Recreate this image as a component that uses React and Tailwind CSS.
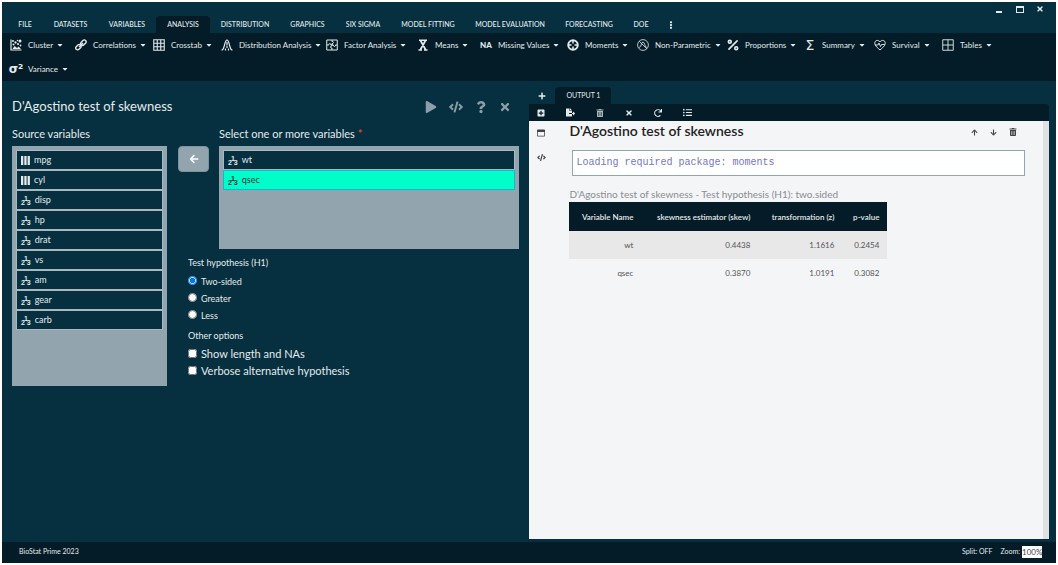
import React, { useState } from 'react';
import {
    FaArrowDown, FaArrowLeft, FaArrowUp, FaCaretDown, FaCode, FaEllipsisV, FaFileExport, FaListUl,
    FaPlay, FaPlus, FaPlusSquare, FaQuestion, FaRedo, FaRegWindowMaximize, FaTimes, FaTrashAlt,
} from 'react-icons/fa';
import { Percent } from 'lucide-react';

const menuTabs = [
    { name: 'FILE', width: 'w-[36px]' },
    { name: 'DATASETS', width: 'w-[55px]' },
    { name: 'VARIABLES', width: 'w-[58px]' },
    { name: 'ANALYSIS', width: 'w-[54px]' },
    { name: 'DISTRIBUTION', width: 'w-[70px]' },
    { name: 'GRAPHICS', width: 'w-[55px]' },
    { name: 'SIX SIGMA', width: 'w-[56px]' },
    { name: 'MODEL FITTING', width: 'w-[74px]' },
    { name: 'MODEL EVALUATION', width: 'w-[90px]' },
    { name: 'FORECASTING', width: 'w-[68px]' },
    { name: 'DOE', width: 'w-[36px]' },
];

const Svg = ({ children, sw = 2 }) => (
    <svg viewBox="0 0 24 24" className="h-3 w-3" fill="none" stroke="currentColor" strokeWidth={sw} aria-hidden="true">
        {children}
    </svg>
);

const ClusterIcon = () => (
    <Svg sw={2.4}>
        <path d="M2 1v21h21" />
        <path d="M5 20l4-6 5 4 3-3 5 5z" fill="currentColor" stroke="none" />
        <g fill="currentColor" stroke="none">
            <circle cx="6" cy="4" r="2" /><circle cx="11" cy="7" r="2.3" /><circle cx="7" cy="11" r="2" />
            <circle cx="16" cy="10" r="2.2" /><circle cx="20" cy="4" r="3" /><circle cx="15" cy="3" r="1.5" />
            <circle cx="21" cy="13" r="1.8" />
        </g>
    </Svg>
);

const LinkIcon = () => (
    <Svg sw={2.8}>
        <rect x="11" y="3.5" width="12" height="7.5" rx="3.7" transform="rotate(-45 17 7.5)" />
        <rect x="1" y="12.5" width="12" height="7.5" rx="3.7" transform="rotate(-45 7 16.5)" />
        <path d="M8 16l8-8" />
    </Svg>
);

const GridIcon = () => (
    <Svg sw={2.2}>
        <path d="M1.5 1.5h21v21h-21zM8.5 1.5v21M15.5 1.5v21M1.5 8.5h21M1.5 15.5h21" />
    </Svg>
);

const BellIcon = () => (
    <Svg sw={2.4}>
        <path d="M1 22c4 0 4-3 6-10 2-8 3-10 5-10s3 2 5 10c2 7 2 10 6 10" />
        <path d="M12 6v6M9 23v-4M12 13v5M15 23v-4" />
    </Svg>
);

const PuzzleIcon = () => (
    <Svg sw={2}>
        <path d="M1.5 2h21v20h-21z" />
        <path d="M12 2v3c4-1 4 5 0 4v5c-4-1-4 5 0 4v4" />
        <path d="M1.5 12h4c-1-4 5-4 4 0H12M12 12h3c-1 4 5 4 4 0h3.5" />
    </Svg>
);

const MeanIcon = () => (
    <Svg sw={3.4}>
        <path d="M4 2.500h16M3 22h7M14 22h7M7 3l10 18M17 3L7 21" />
    </Svg>
);

const MomentsIcon = () => (
    <Svg sw={4}>
        <circle cx="12" cy="12" r="9.5" />
        <path d="M12 3v6M12 15v6M3 12h6M15 12h6" strokeWidth="3" />
    </Svg>
);

const NonParametricIcon = () => (
    <Svg sw={1.6}>
        <circle cx="12" cy="12" r="10.8" />
        <path d="M4.5 4.5l15 15M4 17c5 0 4-11 8-11s3 11 8 11" />
    </Svg>
);

const HeartIcon = () => (
    <Svg sw={1.9}>
        <path d="M12 22C8 18 1.500 14 1.500 8.500 1.500 2 9 1 12 6c3-5 10.500-4 10.500 2.500C22.500 14 16 18 12 22z" />
        <path d="M2 12h6l2-4 3 7 2-4h6" />
    </Svg>
);

const TablesIcon = () => (
    <Svg sw={1.8}>
        <path d="M1.5 1.5h21v21h-21zM12 1.5v21M1.5 12h21" />
    </Svg>
);

const tools = [
    { name: 'Cluster', width: 'w-[65px]', icon: <ClusterIcon /> },
    { name: 'Correlations', width: 'w-[78px]', icon: <LinkIcon /> },
    { name: 'Crosstab', width: 'w-[68px]', icon: <GridIcon /> },
    { name: 'Distribution Analysis', width: 'w-[105px]', icon: <BellIcon /> },
    { name: 'Factor Analysis', width: 'w-[91px]', icon: <PuzzleIcon /> },
    { name: 'Means', width: 'w-[63px]', icon: <MeanIcon /> },
    { name: 'Missing Values', width: 'w-[87px]', icon: <span className="text-[8px] font-black">NA</span> },
    { name: 'Moments', width: 'w-[70px]', icon: <MomentsIcon /> },
    { name: 'Non-Parametric', width: 'w-[90px]', icon: <NonParametricIcon /> },
    { name: 'Proportions', width: 'w-[77px]', icon: <Percent className="h-3.5 w-3.5 shrink-0" strokeWidth={2.8} /> },
    { name: 'Summary', width: 'w-[70px]', icon: <span className="font-['DejaVu_Sans'] text-[14px]">Σ</span> },
    { name: 'Survival', width: 'w-[68px]', icon: <HeartIcon /> },
    { name: 'Tables', width: 'w-[69px]', icon: <TablesIcon /> },
    { name: 'Variance', width: 'w-[64px]', icon: <span className="font-['DejaVu_Sans'] text-[12px] font-bold">σ²</span> },
];

const sourceVariables = [
    { name: 'mpg', type: 'factor' },
    { name: 'cyl', type: 'factor' },
    { name: 'disp', type: 'scale' },
    { name: 'hp', type: 'scale' },
    { name: 'drat', type: 'scale' },
    { name: 'vs', type: 'scale' },
    { name: 'am', type: 'scale' },
    { name: 'gear', type: 'scale' },
    { name: 'carb', type: 'scale' },
];

const results = [
    { name: 'wt', skew: '0.4438', z: '1.1616', p: '0.2454' },
    { name: 'qsec', skew: '0.3870', z: '1.0191', p: '0.3082' },
];

const VariableItem = ({ name, type, selected, onClick }) => (
    <li>
        <button
            onClick={onClick}
            className={`flex h-5 w-full items-center gap-1 border px-1 text-left text-[9px] ${
                selected
                    ? 'border-[#14b8d4] bg-[#00ffc8] text-[#06303f]'
                    : 'border-[#a9b8bf] bg-[#06303f] text-[#e4eaec]'
            }`}
        >
            {type === 'factor' ? (
                <svg viewBox="0 0 9 9" className="h-[9px] w-[9px]" fill="currentColor" aria-hidden="true">
                    <path d="M0 0h2.300v9H0zM3.300 0h2.300v9H3.300zM6.600 0h2.300v9H6.600z" />
                </svg>
            ) : (
                <span className="flex items-end font-['Liberation_Sans',sans-serif] text-[7px] leading-[7px] font-bold">
                    <span>2</span>
                    <span className="-mx-px pb-1">1</span>
                    <span>3</span>
                </span>
            )}
            <span>{name}</span>
        </button>
    </li>
);

const App = () => {
    const [activeTab, setActiveTab] = useState('ANALYSIS');
    const [selected, setSelected] = useState('qsec');
    const [hypothesis, setHypothesis] = useState('Two-sided');

    return (
        <div className="min-h-screen bg-white p-0.5 font-[Lato,sans-serif]">
            <div className="flex min-h-[calc(100vh-4px)] flex-col bg-[#06303f] text-[#e4eaec]">
                <header>
                    <div className="flex h-3.5 items-center justify-end gap-3 pr-3">
                        <button aria-label="Minimize" className="flex h-2 w-2 items-end">
                            <span className="h-0.5 w-1.5 bg-current" />
                        </button>
                        <button aria-label="Maximize" className="h-[7px] w-2 border border-t-2 border-current" />
                        <button aria-label="Close"><FaTimes className="h-2 w-2" /></button>
                    </div>
                    <nav className="flex pl-[5px] text-[7px]">
                        {menuTabs.map((tab) => (
                            <button
                                key={tab.name}
                                onClick={() => setActiveTab(tab.name)}
                                className={`h-[17px] shrink-0 rounded-t-sm text-center font-medium whitespace-nowrap ${tab.width} ${
                                    activeTab === tab.name ? 'bg-[#031c27]' : ''
                                }`}
                            >
                                {tab.name}
                            </button>
                        ))}
                        <button aria-label="More" className="px-2"><FaEllipsisV className="h-2 w-2" /></button>
                    </nav>
                    <div className="flex flex-wrap bg-[#031c27] pl-2 text-[8px]">
                        {tools.map((tool) => (
                            <button
                                key={tool.name}
                                className={`flex h-6 shrink-0 items-center gap-1.5 whitespace-nowrap ${tool.width}`}
                            >
                                <span className="flex h-3 w-3 shrink-0 items-center justify-center leading-3">{tool.icon}</span>
                                <span className="flex items-center gap-[3px]">
                                    {tool.name}
                                    <FaCaretDown className="h-2 w-2" />
                                </span>
                            </button>
                        ))}
                    </div>
                </header>

                <main className="flex flex-1">
                    <section className="flex-1 px-2.5 pt-4">
                        <div className="flex h-5 items-center justify-between">
                            <h1 className="text-[13px]">D'Agostino test of skewness</h1>
                            <div className="flex items-center gap-3 pr-2 text-[#8c9fa8]">
                                <button aria-label="Run"><FaPlay className="h-3 w-3" /></button>
                                <button aria-label="Code"><FaCode className="h-3.5 w-3.5" /></button>
                                <button aria-label="Help"><FaQuestion className="h-3 w-3" /></button>
                                <button aria-label="Close dialog"><FaTimes className="h-3 w-3" /></button>
                            </div>
                        </div>
                        <div className="mt-[9px] flex">
                            <div className="w-[155px]">
                                <h2 className="mb-1 text-[11px] leading-4">Source variables</h2>
                                <ul className="h-60 bg-[#92a4ad] p-1">
                                    {sourceVariables.map((v) => (
                                        <VariableItem
                                            key={v.name}
                                            {...v}
                                            selected={selected === v.name}
                                            onClick={() => setSelected(v.name)}
                                        />
                                    ))}
                                </ul>
                            </div>
                            <div className="flex-1">
                                <div className="flex gap-2.5 pl-[11px]">
                                    <button
                                        aria-label="Move variable"
                                        className="mt-5 flex h-[26px] w-[31px] items-center justify-center rounded-sm border border-[#7f939d] bg-[#92a4ad] text-white"
                                    >
                                        <FaArrowLeft className="h-2.5 w-2.5" />
                                    </button>
                                    <div className="flex-1">
                                        <h2 className="mb-1 text-[11px] leading-4">
                                            Select one or more variables <span className="text-[#e8562a]">*</span>
                                        </h2>
                                        <ul className="h-[103px] bg-[#92a4ad] p-1">
                                            {['wt', 'qsec'].map((name) => (
                                                <VariableItem
                                                    key={name}
                                                    name={name}
                                                    type="scale"
                                                    selected={selected === name}
                                                    onClick={() => setSelected(name)}
                                                />
                                            ))}
                                        </ul>
                                    </div>
                                </div>
                                <div className="pl-[21px] text-[9px]">
                                    <fieldset className="mt-2">
                                        <legend className="leading-3">Test hypothesis (H1)</legend>
                                        <div className="pt-1">
                                            {['Two-sided', 'Greater', 'Less'].map((option) => (
                                                <label key={option} className="flex h-[17px] items-center gap-1">
                                                    <input
                                                        type="radio"
                                                        name="hypothesis"
                                                        checked={hypothesis === option}
                                                        onChange={() => setHypothesis(option)}
                                                        className="mb-0.5 h-[9px] w-[9px] accent-[#0075ff]"
                                                    />
                                                    {option}
                                                </label>
                                            ))}
                                        </div>
                                    </fieldset>
                                    <fieldset className="mt-1.5">
                                        <legend className="leading-3">Other options</legend>
                                        <div className="pt-1">
                                            {['Show length and NAs', 'Verbose alternative hypothesis'].map((option) => (
                                                <label key={option} className="flex h-[17px] items-center gap-1 text-[11px]">
                                                    <input type="checkbox" className="mb-0.5 h-[9px] w-[9px]" />
                                                    {option}
                                                </label>
                                            ))}
                                        </div>
                                    </fieldset>
                                </div>
                            </div>
                        </div>
                    </section>

                    <section className="mr-[7px] mb-[3px] flex w-[49.300%] flex-col pt-1.5">
                        <div className="flex h-[17px] items-center">
                            <button aria-label="New output" className="flex w-[26px] justify-center">
                                <FaPlus className="h-2 w-2" />
                            </button>
                            <button className="h-full rounded-t-sm bg-[#031c27] px-[11px] text-[7px]">OUTPUT 1</button>
                        </div>
                        <div className="flex h-[17px] items-center gap-[21px] rounded-tr-sm bg-[#031c27] pl-2">
                            <button aria-label="Add"><FaPlusSquare className="h-2 w-2" /></button>
                            <button aria-label="Export"><FaFileExport className="h-[9px] w-[9px]" /></button>
                            <button aria-label="Delete" className="text-[#a9b8bf]"><FaTrashAlt className="h-2 w-2" /></button>
                            <button aria-label="Clear"><FaTimes className="h-2 w-2" /></button>
                            <button aria-label="Refresh"><FaRedo className="h-2 w-2" /></button>
                            <button aria-label="List"><FaListUl className="h-[9px] w-[9px]" /></button>
                        </div>
                        <div className="flex flex-1 border-r-6 border-[#e0e1e2] bg-[#f4f5f7] text-[#222]">
                            <div className="flex w-10 flex-col items-start gap-4 pt-2 pl-2 text-[#444]">
                                <button aria-label="Window"><FaRegWindowMaximize className="h-2 w-2" /></button>
                                <button aria-label="Source"><FaCode className="h-[9px] w-[9px]" /></button>
                            </div>
                            <div className="flex-1 pr-[18px]">
                                <div className="flex h-[18px] items-center justify-between">
                                    <h2 className="text-[14px] font-semibold">D'Agostino test of skewness</h2>
                                    <div className="flex gap-3 pt-1 pr-2 text-[#444]">
                                        <button aria-label="Move up"><FaArrowUp className="h-[7px] w-[7px]" /></button>
                                        <button aria-label="Move down"><FaArrowDown className="h-[7px] w-[7px]" /></button>
                                        <button aria-label="Delete result"><FaTrashAlt className="h-2 w-2" /></button>
                                    </div>
                                </div>
                                <pre className="mt-[11px] ml-[3px] border border-[#8fa8ae] bg-white px-[3px] font-['Liberation_Mono',monospace] text-[10px] leading-6 text-[#7777b8]">
                                    Loading required package: moments
                                </pre>
                                <table className="mt-2.5 text-right text-[8px] text-[#555]">
                                    <caption className="text-left text-[10px] leading-4 whitespace-nowrap text-[#888d91]">
                                        D'Agostino test of skewness - Test hypothesis (H1): two.sided
                                    </caption>
                                    <thead>
                                        <tr className="h-[29px] bg-[#031c27] text-[#e4eaec]">
                                            <th className="w-[72px] pr-2 font-semibold whitespace-nowrap">Variable Name</th>
                                            <th className="w-[117px] pr-2 font-semibold whitespace-nowrap">skewness estimator (skew)</th>
                                            <th className="w-[84px] pr-2 font-semibold whitespace-nowrap">transformation (z)</th>
                                            <th className="w-[45px] pr-2 font-semibold whitespace-nowrap">p-value</th>
                                        </tr>
                                    </thead>
                                    <tbody>
                                        {results.map((row) => (
                                            <tr key={row.name} className="h-7 odd:bg-[#e8e8e9]">
                                                <td className="pr-2">{row.name}</td>
                                                <td className="pr-2">{row.skew}</td>
                                                <td className="pr-2">{row.z}</td>
                                                <td className="pr-2">{row.p}</td>
                                            </tr>
                                        ))}
                                    </tbody>
                                </table>
                            </div>
                        </div>
                    </section>
                </main>

                <footer className="flex h-[21px] items-center justify-between bg-[#031c27] pr-3.5 pb-0.5 pl-[17px] text-[7px]">
                    <span>BioStat Prime 2023</span>
                    <div className="flex items-center gap-2">
                        <span>Split: OFF</span>
                        <label className="flex items-center gap-0.5">
                            Zoom:
                            <input defaultValue="100%" className="h-3 w-5 bg-white text-center text-[8px] text-[#444]" />
                        </label>
                    </div>
                </footer>
            </div>
        </div>
    );
};

export default App;
